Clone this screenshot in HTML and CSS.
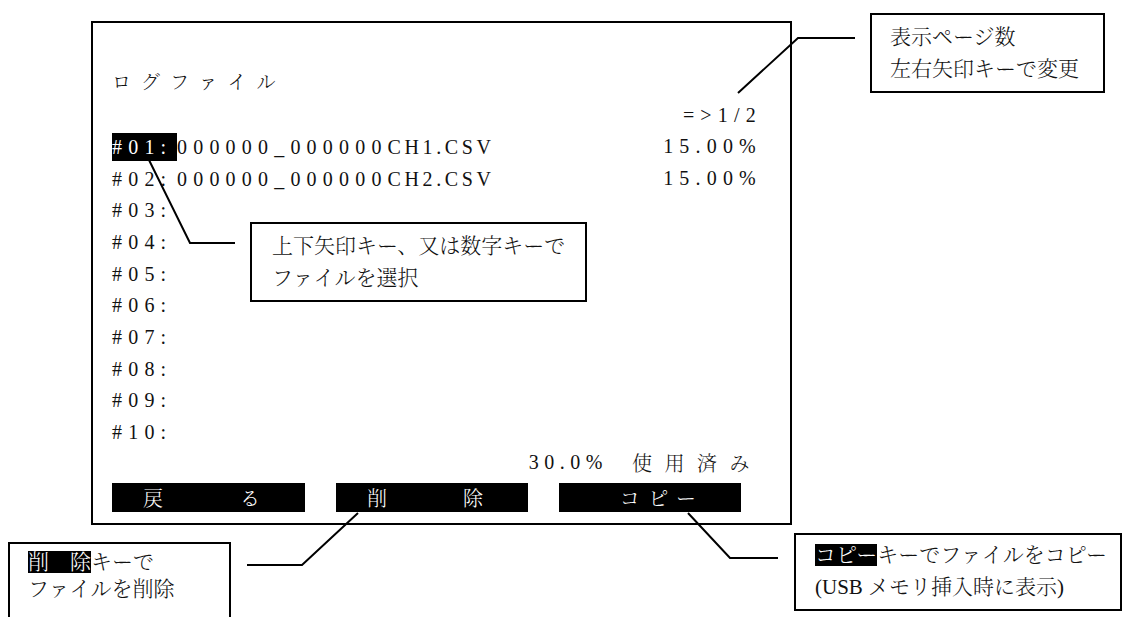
FILE: index.html
```html
<!DOCTYPE html>
<html lang="ja">
  <head>
    <meta charset="utf-8">
    <title>ログファイル</title>
    <link rel="stylesheet" href="styles.css">
  </head>
  <body>
    <div class="sheet">
      <div class="screen">
        <div class="title">ログファイル</div>
        <div class="page">=&gt;1/2</div>
        <ul class="files">
          <li><span class="name"><span class="no sel">#01:</span>000000_000000<span class="ext">CH1.CSV</span></span><span class="pct">15.00%</span></li>
          <li><span class="name"><span class="no">#02:</span>000000_000000<span class="ext">CH2.CSV</span></span><span class="pct">15.00%</span></li>
          <li><span class="name"><span class="no">#03:</span></span></li>
          <li><span class="name"><span class="no">#04:</span></span></li>
          <li><span class="name"><span class="no">#05:</span></span></li>
          <li><span class="name"><span class="no">#06:</span></span></li>
          <li><span class="name"><span class="no">#07:</span></span></li>
          <li><span class="name"><span class="no">#08:</span></span></li>
          <li><span class="name"><span class="no">#09:</span></span></li>
          <li><span class="name"><span class="no">#10:</span></span></li>
        </ul>
        <div class="usage"><span class="num">30.0%</span><span class="jp">使用済み</span></div>
        <div class="keys">
          <div class="key back"><span>戻</span><span>る</span></div>
          <div class="key del"><span>削</span><span>除</span></div>
          <div class="key copy"><span>コピー</span></div>
        </div>
      </div>

      <!-- leader lines from the notes to the screen -->
      <svg class="leaders" width="1130" height="617" viewBox="0 0 1130 617">
        <polyline points="855,38 798,38 738,93" />
        <polyline points="149,160 190,243 235,243" />
        <polyline points="358,513 302,565 247,565" />
        <polyline points="688,513 730,558 778,558" />
      </svg>

      <div class="note note-page">表示ページ数<br>左右矢印キーで変更</div>
      <div class="note note-select">上下矢印キー、又は数字キーで<br>ファイルを選択</div>
      <div class="note note-delete"><span class="hl">削　除</span>キーで<br>ファイルを削除</div>
      <div class="note note-copy"><span class="hl">コピー</span>キーでファイルをコピー<br>(USB メモリ挿入時に表示)</div>
    </div>
  </body>
</html>
```

FILE: styles.css
```css
body {
  margin: 0;
  padding: 0;
  background-color: #fff;
  color: #111;
  font-family: "Liberation Serif", "Noto Serif CJK JP", "Noto Sans CJK JP", serif;
}
.sheet {
  position: relative;
  width: 1130px;
  height: 617px;
  overflow: hidden;
}
.screen {
  margin: 21px 0 0 91px;
  width: 701px;
  height: 504px;
  box-sizing: border-box;
  border: 2px solid #000;
  padding: 0 28px 0 19px;
}
.title {
  padding-top: 44px;
  height: 32px;
  line-height: 32px;
  font-size: 19px;
  letter-spacing: 10px;
  font-weight: 300;
}
.page {
  height: 32px;
  line-height: 32px;
  text-align: right;
  font-size: 20px;
  letter-spacing: 6.2px;
}
.files {
  list-style: none;
  margin: 0;
  padding: 0;
}
.files li {
  display: flex;
  justify-content: space-between;
  align-items: center;
  height: 31.7px;
  font-size: 20px;
  letter-spacing: 6.2px;
}
.no {
  display: inline-block;
  width: 65px;
  height: 28px;
  line-height: 28px;
}
.ext {
  letter-spacing: 3.6px;
}
.sel {
  background-color: #000;
  color: #fff;
}
.usage {
  display: flex;
  justify-content: flex-end;
  align-items: center;
  height: 30px;
}
.usage .num {
  font-size: 20px;
  letter-spacing: 5.5px;
  margin-right: 24px;
}
.usage .jp {
  font-size: 20px;
  letter-spacing: 12.5px;
  font-weight: 300;
}
.keys {
  display: flex;
  gap: 31px;
  margin-top: 5px;
}
.key {
  display: flex;
  align-items: center;
  justify-content: space-between;
  height: 29px;
  box-sizing: border-box;
  padding: 0 45px 0 31px;
  background-color: #000;
  color: #fff;
  font-size: 20px;
  font-weight: 300;
}
.back {
  width: 193px;
}
.del {
  width: 192px;
}
.copy {
  width: 182px;
  justify-content: flex-end;
}
.copy span {
  letter-spacing: 8.5px;
  margin-right: -8.5px;
}
.leaders {
  position: absolute;
  left: 0;
  top: 0;
  pointer-events: none;
}
.leaders polyline {
  fill: none;
  stroke: #000;
  stroke-width: 2;
}
.note {
  position: absolute;
  box-sizing: border-box;
  border: 2px solid #000;
  background-color: #fff;
  font-size: 21px;
  line-height: 32px;
  font-weight: 300;
  white-space: nowrap;
}
.note-page {
  left: 870px;
  top: 13px;
  width: 235px;
  height: 80px;
  padding: 6px 0 0 18px;
}
.note-select {
  left: 250px;
  top: 222px;
  width: 337px;
  height: 80px;
  padding: 6px 0 0 20px;
}
.note-delete {
  left: 8px;
  top: 542px;
  width: 223px;
  height: 90px;
  padding: 5px 0 0 18px;
  line-height: 27px;
}
.note-copy {
  left: 794px;
  top: 533px;
  width: 328px;
  height: 78px;
  padding: 4px 0 0 19px;
}
.hl {
  display: inline-block;
  line-height: 22px;
  background-color: #000;
  color: #fff;
}
```
